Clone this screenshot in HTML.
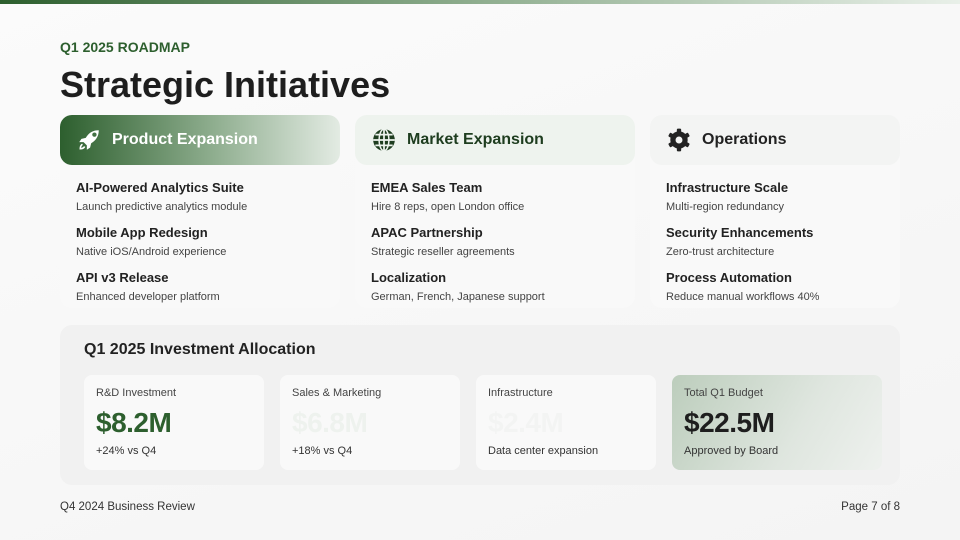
<!DOCTYPE html>
<html><head><meta charset="utf-8"><style>
*{margin:0;padding:0;box-sizing:border-box}
body{width:960px;height:540px;overflow:hidden;font-family:"Liberation Sans",sans-serif;background:linear-gradient(160deg,#fbfbfb,#f4f4f4);position:relative;color:#222}
.bar{position:absolute;left:0;top:0;width:960px;height:4px;background:linear-gradient(90deg,#2d5f2e,#8fae8f 50%,#e9f0e9)}
.kicker{position:absolute;left:60px;top:39px;font-size:14px;font-weight:bold;color:#2d5f2e}
h1{position:absolute;left:60px;top:64px;font-size:36px;font-weight:bold;color:#1e1e1e}
.col{position:absolute;top:115px;height:193px;border-radius:12px;background:#f9f9f9}
.hd{height:50px;border-radius:12px;display:flex;align-items:center;padding-left:16px;font-size:16px;font-weight:bold}
.hd svg{margin-right:10px}
.it{padding-left:16px}
.it b{display:block;font-size:13px;line-height:15px;color:#222;margin-top:11px}
.it b:first-child{margin-top:15px}
.it span{display:block;font-size:11px;line-height:13px;color:#444;margin-top:6px}
.inv{position:absolute;left:60px;top:325px;width:840px;height:160px;border-radius:12px;background:#f1f1f1}
.inv h2{position:absolute;left:24px;top:16px;font-size:16px;font-weight:bold;color:#222}
.c{position:absolute;top:50px;height:95px;border-radius:8px;background:#f9f9f9;padding:12px}
.c .l{font-size:11px;color:#444}
.c .v{font-size:28px;font-weight:bold;margin-top:8px;letter-spacing:-0.5px}
.c .s{font-size:11px;color:#333;margin-top:6px}
.foot{position:absolute;top:501px;font-size:11.5px;color:#333}
</style></head><body>
<div class="bar"></div>
<div class="kicker">Q1 2025 ROADMAP</div>
<h1>Strategic Initiatives</h1>

<div class="col" style="left:60px;width:280px">
 <div class="hd" style="background:linear-gradient(90deg,#2d5f2e,#8fae8f 55%,#e3ebe3);color:#fff">
 <svg width="26" height="26" viewBox="0 0 24 24"><path fill="#fff" d="M21 3c-5 0-9 2-12 7l-4 1-2 3 4 0 3 3 0 4 3-2 1-4c5-3 7-7 7-12zM15 7a2 2 0 1 1 0 .1z"/><path d="M6 16c-2 1-2 3-2 4 1 0 3 0 4-2" stroke="#fff" stroke-width="1.5" fill="none"/></svg>Product Expansion</div>
 <div class="it"><b>AI-Powered Analytics Suite</b><span>Launch predictive analytics module</span><b>Mobile App Redesign</b><span>Native iOS/Android experience</span><b>API v3 Release</b><span>Enhanced developer platform</span></div>
</div>
<div class="col" style="left:355px;width:280px">
 <div class="hd" style="background:#eef3ee;color:#1e3d1f">
 <svg width="26" height="26" viewBox="0 0 24 24"><circle cx="12" cy="12" r="10" fill="#1e3d1f"/><path d="M2 12h20M12 2v20M4 7h16M4 17h16" stroke="#eef3ee" stroke-width="1.6"/><ellipse cx="12" cy="12" rx="4.5" ry="10" fill="none" stroke="#eef3ee" stroke-width="1.4"/></svg>Market Expansion</div>
 <div class="it"><b>EMEA Sales Team</b><span>Hire 8 reps, open London office</span><b>APAC Partnership</b><span>Strategic reseller agreements</span><b>Localization</b><span>German, French, Japanese support</span></div>
</div>
<div class="col" style="left:650px;width:250px">
 <div class="hd" style="background:#f3f4f3;color:#222">
 <svg width="26" height="26" viewBox="0 0 24 24"><g fill="#222"><circle cx="12" cy="12" r="8"/><g id="t"><rect x="10" y="1.5" width="4" height="5" rx="1"/><rect x="10" y="17.5" width="4" height="5" rx="1"/></g><use href="#t" transform="rotate(60 12 12)"/><use href="#t" transform="rotate(120 12 12)"/></g><circle cx="12" cy="12" r="3.2" fill="#f3f4f3"/></svg>Operations</div>
 <div class="it"><b>Infrastructure Scale</b><span>Multi-region redundancy</span><b>Security Enhancements</b><span>Zero-trust architecture</span><b>Process Automation</b><span>Reduce manual workflows 40%</span></div>
</div>

<div class="inv"><h2>Q1 2025 Investment Allocation</h2>
 <div class="c" style="left:24px;width:180px"><div class="l">R&amp;D Investment</div><div class="v" style="color:#2d5f2e">$8.2M</div><div class="s">+24% vs Q4</div></div>
 <div class="c" style="left:220px;width:180px"><div class="l">Sales &amp; Marketing</div><div class="v" style="color:#eef2ee">$6.8M</div><div class="s">+18% vs Q4</div></div>
 <div class="c" style="left:416px;width:180px"><div class="l">Infrastructure</div><div class="v" style="color:#f3f4f3">$2.4M</div><div class="s">Data center expansion</div></div>
 <div class="c" style="left:612px;width:210px;background:linear-gradient(120deg,#bccdbc,#dfe6df 60%,#eef1ee)"><div class="l">Total Q1 Budget</div><div class="v" style="color:#1e1e1e">$22.5M</div><div class="s">Approved by Board</div></div>
</div>
<div class="foot" style="left:60px">Q4 2024 Business Review</div>
<div class="foot" style="right:60px">Page 7 of 8</div>
</body></html>
